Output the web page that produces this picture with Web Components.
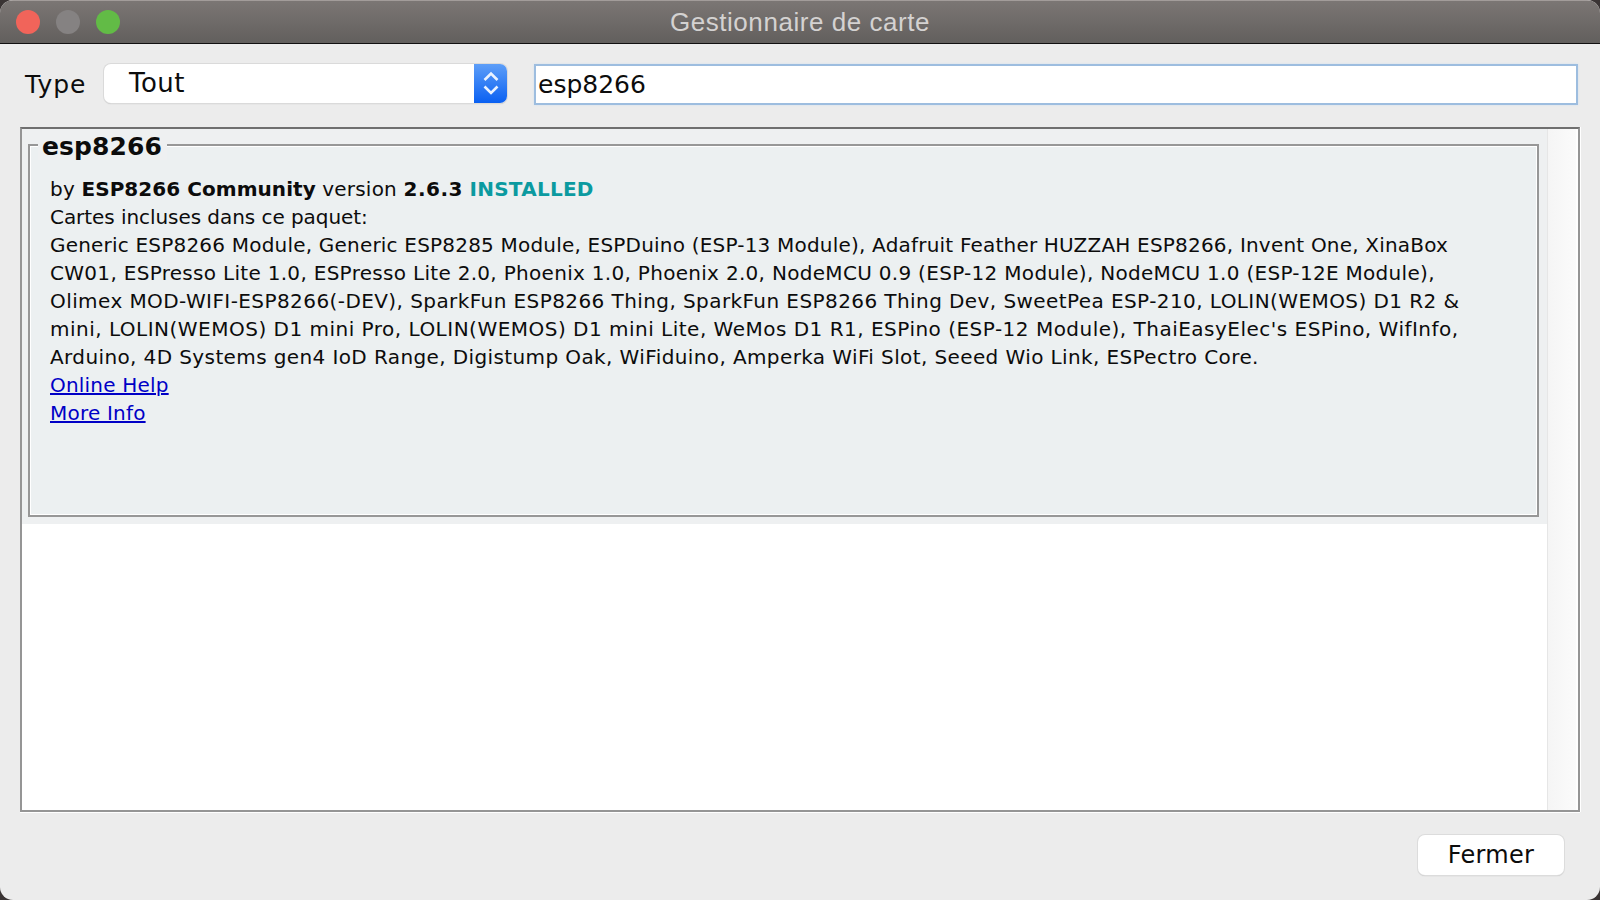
<!DOCTYPE html>
<html lang="fr"><head><meta charset="utf-8"><title>Gestionnaire de carte</title>
<style>
html,body{margin:0;height:100%;background:#3a3434;overflow:hidden}
body{font-family:"DejaVu Sans",sans-serif;color:#0c0c0c}
</style></head><body>
<board-window>
  <title-bar slot="title">Gestionnaire de carte</title-bar>
  <filter-bar slot="filters"></filter-bar>
  <board-list slot="list">
    <board-card name="esp8266" author="ESP8266 Community" version="2.6.3" status="INSTALLED" heading="Cartes incluses dans ce paquet:">
      <div>Generic ESP8266 Module, Generic ESP8285 Module, ESPDuino (ESP-13 Module), Adafruit Feather HUZZAH ESP8266, Invent One, XinaBox</div>
      <div style="letter-spacing:.3px">CW01, ESPresso Lite 1.0, ESPresso Lite 2.0, Phoenix 1.0, Phoenix 2.0, NodeMCU 0.9 (ESP-12 Module), NodeMCU 1.0 (ESP-12E Module),</div>
      <div style="letter-spacing:.42px">Olimex MOD-WIFI-ESP8266(-DEV), SparkFun ESP8266 Thing, SparkFun ESP8266 Thing Dev, SweetPea ESP-210, LOLIN(WEMOS) D1 R2 &amp;</div>
      <div style="letter-spacing:.49px">mini, LOLIN(WEMOS) D1 mini Pro, LOLIN(WEMOS) D1 mini Lite, WeMos D1 R1, ESPino (ESP-12 Module), ThaiEasyElec's ESPino, WifInfo,</div>
      <div style="letter-spacing:.39px">Arduino, 4D Systems gen4 IoD Range, Digistump Oak, WiFiduino, Amperka WiFi Slot, Seeed Wio Link, ESPectro Core.</div>
    </board-card>
  </board-list>
  <mac-button slot="footer">Fermer</mac-button>
</board-window>
<script>
function def(name,html){customElements.define(name,class extends HTMLElement{
  constructor(){super();this.attachShadow({mode:"open"}).innerHTML=typeof html==="function"?html(this):html}
})}
def("board-window",`<style>
:host{display:flex;flex-direction:column;width:1600px;height:900px;background:#ececec;border-radius:13px;overflow:hidden}
.filters{display:block;padding:19px 22px 22px 24px}
.list{display:block;margin:0 20px;flex:1}
.footer{display:flex;justify-content:flex-end;padding:23px 36px 25px 0}
</style>
<slot name="title"></slot>
<div class="filters"><slot name="filters"></slot></div>
<div class="list"><slot name="list"></slot></div>
<div class="footer"><slot name="footer"></slot></div>`);
def("title-bar",`<style>
:host{display:flex;align-items:center;height:44px;box-sizing:border-box;position:relative;background:linear-gradient(#7b7674,#625f5d);border-top:1px solid #a29c9a;border-bottom:1px solid #111;justify-content:center}
.t{font:26px/44px "Liberation Sans",sans-serif;letter-spacing:.55px;color:#d4d2d1}
.lights{position:absolute;left:16px;top:9px;display:flex;gap:16px}
i{display:block;width:24px;height:24px;border-radius:50%}
</style><div class="lights"><i style="background:#f1645a"></i><i style="background:#858282"></i><i style="background:#62bb46"></i></div><div class="t"><slot></slot></div>`);
def("filter-bar",`<style>
:host{display:flex;align-items:center;height:42px}
.lab{font-size:25px;letter-spacing:1px;width:79px;padding-left:1px;line-height:44px;height:42px}
</style><div class="lab">Type</div><type-select>Tout</type-select><search-field>esp8266</search-field>`);
def("type-select",`<style>
:host{display:flex;width:403px;height:39px;margin-right:27px;margin-top:-2px;border-radius:7px;overflow:hidden;background:#fff;box-shadow:0 0 0 1px #dadada,0 1px 1px #b4b4b4;font-size:26px;letter-spacing:.5px}
.v{flex:1;padding-left:25px;line-height:38px}
.a{width:33px;background:linear-gradient(#5d9ef8,#0a60f2);display:flex;align-items:center;justify-content:center}
</style><div class="v"><slot></slot></div><div class="a"><svg width="20" height="30" viewBox="0 0 20 30" fill="none" stroke="#eaf2ff" stroke-width="2.6"><path d="M3.5 12 10 5.5 16.5 12M3.5 18.500 10 25 16.500 18.500"/></svg></div>`);
def("search-field",`<style>
:host{display:block;box-sizing:border-box;width:1044px;height:41px;background:#fff;border:2px solid #9dbddf;box-shadow:0 0 2px #cfe0f0;font-size:25px;line-height:38px;padding-left:2px}
</style><slot></slot>`);
def("board-list",`<style>
:host{display:flex;box-sizing:border-box;height:685px;background:#fff;border:2px solid #959595;border-top-color:#6f6f6f;box-shadow:0 1px 0 #fff,1px 0 0 #fff}
.main{flex:1;min-width:0}
.bar{width:28px;background:linear-gradient(90deg,#f5f5f5,#fbfbfb);border-left:1px solid #e6e6e6;border-right:2px solid #fff;box-sizing:content-box}
</style><div class="main"><slot></slot></div><div class="bar"></div>`);
def("board-card",h=>`<style>
:host{display:block;background:#eef0f1;padding:1px 8px 7px 6px}
fieldset{margin:0;min-width:0;box-sizing:border-box;height:387px;border:2px solid #979797;padding:15px 0 0 20px;background:#ecf0f1;box-shadow:inset 0 0 0 1px #fff;font-size:20px;letter-spacing:.2px;line-height:28px;white-space:nowrap}
legend{font-size:25px;font-weight:700;letter-spacing:.1px;line-height:26px;padding:4px 5px 0 4px;margin-left:-12px;background:#eef0f1}
b{font-weight:700}.s{color:#0b9aa0;font-weight:700;letter-spacing:.25px}
.au{letter-spacing:.05px}.ve{letter-spacing:.5px}
.he{letter-spacing:-.06px}
a{color:#0000c6;display:block;width:max-content}
</style><fieldset><legend>${h.getAttribute("name")}</legend>
<div>by <b class="au">${h.getAttribute("author")}</b> version <b class="ve">${h.getAttribute("version")}</b> <span class="s">${h.getAttribute("status")}</span></div>
<div class="he">${h.getAttribute("heading")}</div>
<slot></slot>
<a href="#">Online Help</a><a href="#">More Info</a></fieldset>`);
def("mac-button",`<style>
:host{display:flex;align-items:center;justify-content:center;width:146px;height:40px;background:#fff;border-radius:7px;box-shadow:0 0 0 1px #dcdcdc,0 1px 1px #b0b0b0;font-size:24px;letter-spacing:.3px}
</style><slot></slot>`);
</script>
</body></html>
